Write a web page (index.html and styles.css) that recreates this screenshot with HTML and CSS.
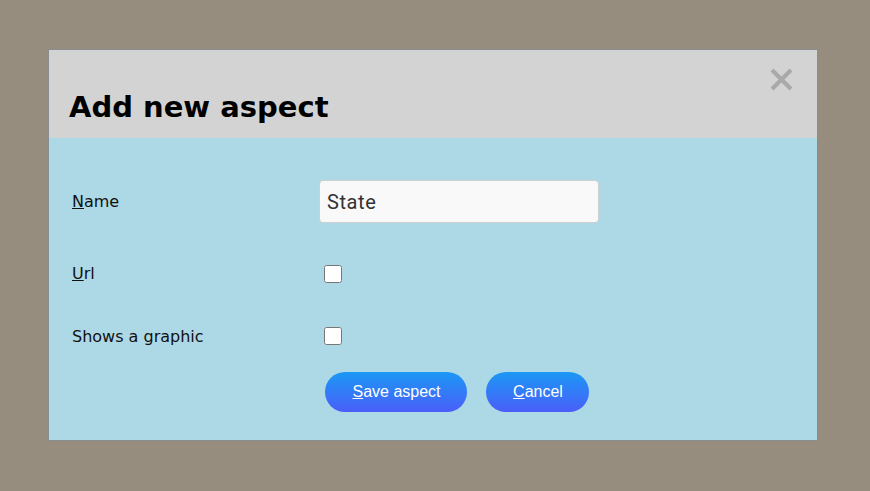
FILE: index.html
```html
<!DOCTYPE html>
<html>
<head>
<meta charset="utf-8">
<link rel="stylesheet" href="styles.css">
</head>
<body>
<div class="dialog">
  <div class="dialog-header">
    <h2 class="title">Add new aspect</h2>
    <button class="close" aria-label="Close">
      <svg width="23" height="23" viewBox="0 0 23 23"><path d="M2 2 L21 21 M21 2 L2 21" stroke="#a9a9a9" stroke-width="4.2" stroke-linecap="butt"/></svg>
    </button>
  </div>
  <div class="dialog-body">
    <div class="row row-name">
      <label class="label"><u>N</u>ame</label>
      <input class="text-input" type="text" value="State">
    </div>
    <div class="row row-url">
      <label class="label"><u>U</u>rl</label>
      <input class="check" type="checkbox">
    </div>
    <div class="row row-graphic">
      <label class="label label-low">Shows a graphic</label>
      <input class="check" type="checkbox">
    </div>
    <div class="actions">
      <button class="btn btn-save"><u>S</u>ave aspect</button>
      <button class="btn btn-cancel"><u>C</u>ancel</button>
    </div>
  </div>
</div>
</body>
</html>
```
FILE: styles.css
```css
html, body {
  margin: 0;
  padding: 0;
  background: #978d7e;
  width: 870px;
  height: 491px;
  overflow: hidden;
}
.dialog {
  box-sizing: border-box;
  margin: 49px 0 0 48px;
  width: 770px;
  border: 1px solid #878d90;
  background: #add8e6;
}
.dialog-header {
  position: relative;
  box-sizing: border-box;
  height: 88px;
  background: #d3d3d3;
  padding: 40px 20px 0 20px;
}
.title {
  margin: 0;
  font-family: "DejaVu Sans", sans-serif;
  font-weight: bold;
  font-size: 29px;
  line-height: 34px;
  color: #000;
}
.close {
  position: absolute;
  top: 18px;
  right: 24px;
  width: 23px;
  height: 23px;
  padding: 0;
  border: 0;
  background: transparent;
  display: flex;
}
.dialog-body {
  box-sizing: border-box;
  height: 302px;
  padding: 42px 23px 0 23px;
  font-family: "DejaVu Sans", sans-serif;
  font-size: 16px;
  color: #111;
}
.row {
  display: grid;
  grid-template-columns: 247px 1fr;
  align-items: center;
}
.row-name { height: 43px; }
.row-url { height: 18px; margin-top: 41px; }
.row-graphic { height: 18px; margin-top: 44px; }
.label {
  line-height: 18px;
  padding-top: 1px;
}
.label-low {
  padding-top: 2px;
}
.text-input {
  box-sizing: border-box;
  width: 280px;
  height: 43px;
  margin: 0;
  padding: 0 7px;
  border: 1px solid #cfcfcf;
  border-radius: 4px;
  background: #f9f9f9;
  font-family: Roboto, sans-serif;
  font-size: 20px;
  letter-spacing: 0.6px;
  color: #333;
  outline: none;
}
.check {
  width: 18px;
  height: 18px;
  margin: 0 0 0 5px;
}
.actions {
  display: flex;
  gap: 19px;
  margin-top: 28px;
  padding-left: 253px;
}
.btn {
  height: 40px;
  padding: 0 26px 0 27px;
  border: 0;
  border-radius: 20px;
  background: linear-gradient(to bottom, #1b98f5, #4a5ef9);
  color: #fff;
  font-family: "Liberation Sans", Arial, sans-serif;
  font-size: 16px;
  cursor: pointer;
}
.btn-save { width: 142px; }
.btn-cancel { width: 103px; }
```
